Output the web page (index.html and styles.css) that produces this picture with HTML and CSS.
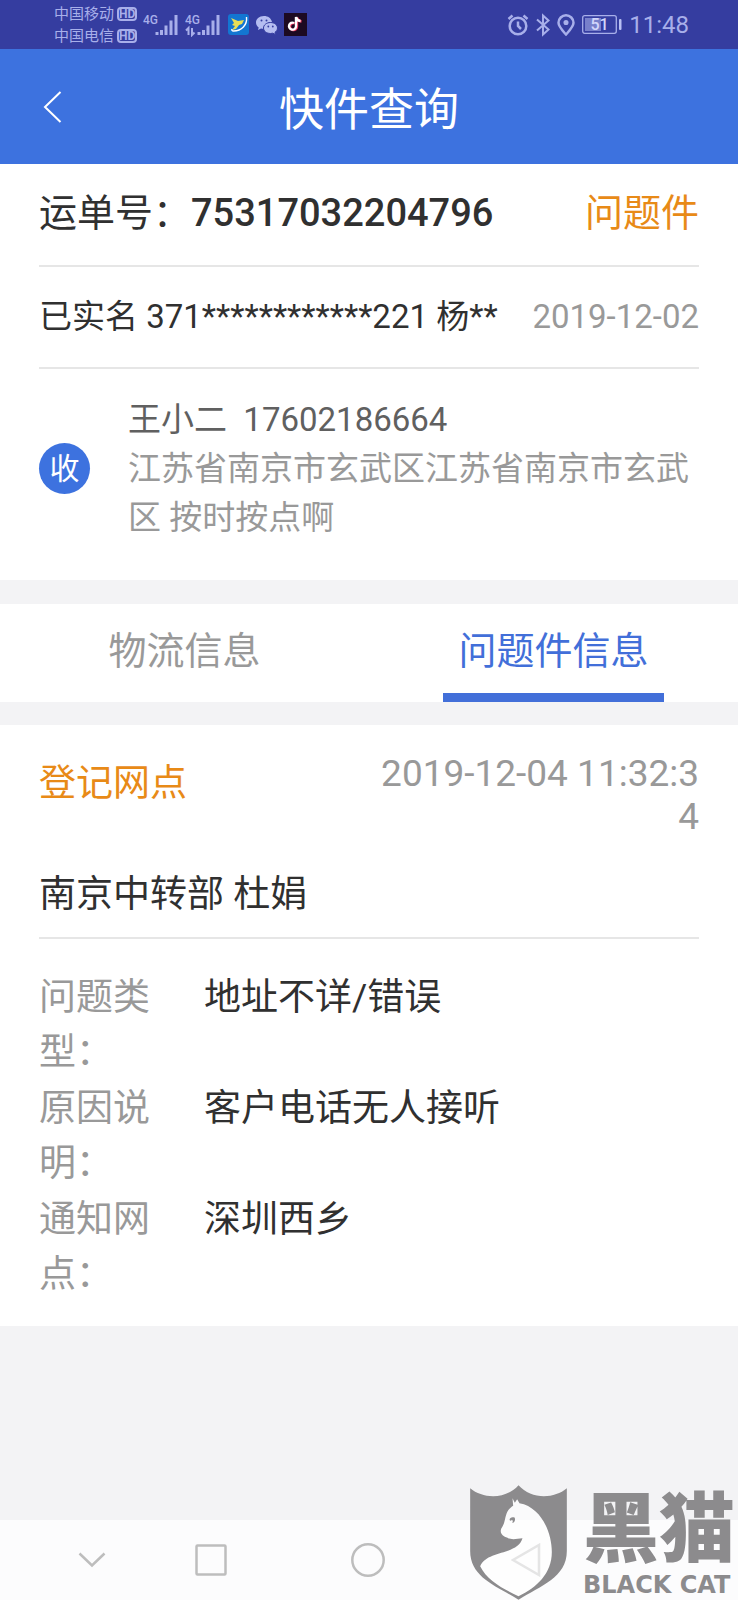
FILE: index.html
```html
<!DOCTYPE html>
<html lang="zh-CN">
<head>
<meta charset="utf-8">
<meta name="viewport" content="width=device-width, initial-scale=1">
<title>快件查询</title>
<link rel="stylesheet" href="styles.css">
</head>
<body>
<div class="page">
  <div class="status">
    <div class="status-left">
      <div class="carriers">
        <div class="carrier"><span>中国移动</span><span class="hd">HD</span></div>
        <div class="carrier"><span>中国电信</span><span class="hd">HD</span></div>
      </div>
      <svg class="signal" width="36" height="24" viewBox="0 0 36 24">
        <text x="0" y="11" class="net">4G</text>
        <g class="bars"><path d="M14 19v3M18.500 17v5M23 12.500v9.500M28 7.500v14.500M33 2v20"/></g>
      </svg>
      <svg class="signal" width="36" height="24" viewBox="0 0 36 24">
        <text x="0" y="11" class="net">4G</text>
        <g class="bars"><path d="M14 19v3M18.500 17v5M23 12.500v9.500M28 7.500v14.500M33 2v20"/></g>
        <path class="arrows" d="M3.500 22v-7l-2.500 2.500M7 15v7l2.500-2.500"/>
      </svg>
      <svg class="app-bird" width="21" height="21" viewBox="0 0 21 21">
        <rect width="21" height="21" rx="3" fill="#1376d2"/>
        <path d="M3 4l7 3 6-1-2 4-3 1-3 4-4 1 3-4-3-1 2-2z" fill="#e9df55"/>
        <path d="M18.500 3c1 8-5 14-13 14-1.500 0-2-1-1.500-2" fill="none" stroke="#fff" stroke-width="1.400"/>
      </svg>
      <svg class="app-chat" width="23" height="20" viewBox="0 0 23 20">
        <path d="M9 1C4 1 1 4 1 7.500c0 2 1 3.800 2.700 5L3 15l3-1.500 3 .5c0-4 3-7 8-7C16 3 13 1 9 1z" fill="#b5bdf1"/>
        <path d="M15.500 7.500c-4 0-7 2.500-7 5.500s3 5.500 7 5.500l2.300-.3L20.500 19.500l-.5-2.200c1.500-1 2.500-2.600 2.500-4.300 0-3-3-5.500-7-5.500z" fill="#b5bdf1" stroke="#353da0"/>
        <g fill="#353da0"><circle cx="6.500" cy="5.500" r="1"/><circle cx="11.500" cy="5.500" r="1"/><circle cx="13.300" cy="11.500" r=".9"/><circle cx="17.800" cy="11.500" r=".9"/></g>
      </svg>
      <svg class="app-note" width="23" height="23" viewBox="0 0 23 23">
        <rect width="23" height="23" fill="#1c0a22"/>
        <g fill="none" stroke-width="2.400"><path d="M11 10.500a3.500 3.500 0 1 0 2 3.300V4.500c.5 2.500 2 3.700 4.500 4" stroke="#ee3c63"/><path d="M10 10a3.500 3.500 0 1 0 2 3.300V4c.5 2.500 2 3.700 4.500 4" stroke="#fff"/></g>
      </svg>
    </div>
    <div class="status-right">
      <svg width="22" height="22" viewBox="0 0 22 22" class="line-icon"><circle cx="11" cy="12" r="8.300"/><path d="M11 7.500V12l3 3M1.500 5l4-3.500M20.500 5l-4-3.500"/></svg>
      <svg width="14" height="24" viewBox="0 0 14 24" class="line-icon thin"><path d="M1 6.500l11.500 10L7 21.500V2.500l5.500 5L1 17.500"/></svg>
      <svg width="18" height="22" viewBox="0 0 18 22" class="line-icon"><path d="M9 20.500C5 16 1.500 12.500 1.500 8.800a7.500 7.500 0 0 1 15 0C16.500 12.500 13 16 9 20.500z"/><circle cx="9" cy="8.500" r="1.300"/></svg>
      <svg width="40" height="19" viewBox="0 0 40 19" class="battery"><rect x=".7" y=".7" width="33.600" height="17.600" rx="2" fill="none" stroke="#a8afea" stroke-width="1.300"/><rect x="3" y="3" width="16" height="13" fill="#7880cb"/><rect x="37" y="4" width="2.500" height="11" rx="1" fill="#b9c0f4"/><text x="17.500" y="15" text-anchor="middle">51</text></svg>
      <span class="clock">11:48</span>
    </div>
  </div>

  <header class="header">
    <button class="back" type="button" aria-label="返回"><svg width="20" height="34" viewBox="0 0 20 34"><path d="M17.500 2L2 17l15.500 15"/></svg></button>
    <h1 class="title">快件查询</h1>
  </header>

  <main>
    <section class="card">
      <div class="row row-number">
        <span>运单号：<strong class="number">75317032204796</strong></span>
        <span class="warn">问题件</span>
      </div>
      <div class="row row-person">
        <span>已实名 371************221 杨**</span>
        <span class="muted">2019-12-02</span>
      </div>
      <div class="receiver">
        <span class="badge">收</span>
        <div class="address">
          <div class="contact">王小二&nbsp; 17602186664</div>
          <div class="muted">江苏省南京市玄武区江苏省南京市玄武区 按时按点啊</div>
        </div>
      </div>
    </section>

    <div class="tabs" role="tablist">
      <button class="tab" type="button" role="tab" aria-selected="false">物流信息</button>
      <button class="tab tab-active" type="button" role="tab" aria-selected="true">问题件信息</button>
    </div>

    <section class="card card-issue">
      <div class="issue-head">
        <span class="warn issue-title">登记网点</span>
        <span class="muted issue-time">2019-12-04 11:32:34</span>
      </div>
      <div class="issue-site">南京中转部 杜娟</div>
      <dl class="details">
        <dt>问题类型：</dt><dd>地址不详/错误</dd>
        <dt>原因说明：</dt><dd>客户电话无人接听</dd>
        <dt>通知网点：</dt><dd>深圳西乡</dd>
      </dl>
    </section>
  </main>

  <nav class="nav">
    <button type="button" aria-label="收起"><svg width="28" height="16" viewBox="0 0 28 16"><path d="M1.500 1.500L14 13.500l12.500-12"/></svg></button>
    <button type="button" aria-label="多任务"><svg width="32" height="32" viewBox="0 0 32 32"><rect x="1.500" y="1.500" width="29" height="29" rx="1"/></svg></button>
    <button type="button" aria-label="主页"><svg width="34" height="34" viewBox="0 0 34 34"><circle cx="17" cy="17" r="15.700"/></svg></button>
    <button type="button" aria-label="返回"><svg width="30" height="34" viewBox="0 0 30 34"><path d="M28 2v30L2 17z"/></svg></button>
  </nav>

  <div class="mark">
    <svg class="shield" width="97" height="115" viewBox="88 74 290 345">
      <path fill="#fff" fill-opacity=".6" d="M215 114l7 13 7-10 7 12C300 140 333 215 333 275c0 65-45 106-100 133-46-22-95-48-115-90 20-50 112-32 127-84-18 2-36 5-45-2-14-4-24-14-20-27 10-15 9-28 15-45 5-13 13-20 19-24z"/>
      <path fill="#8c8b8d" fill-rule="evenodd" d="M88 84c38 32 107 34 145-9 38 43 107 41 145 9v188c0 80-80 105-145 146C168 377 88 352 88 272zM215 114l2 22c-6 4-15 11-20 24-6 17-5 30-16 45-5 13 5 23 19 27 9 7 27 4 45 2-15 52-107 34-127 84 20 42 69 68 115 90 55-27 100-68 100-133 0-60-33-135-97-146l-7-12-7 10z"/>
      <path fill="#8c8b8d" d="M206 179c1-8 8-10 16-7 2 8-1 15-8 16 3-5 2-8-1-10-2 4-4 4-7 1z"/>
    </svg>
    <div class="mark-text">
      <span class="mark-name">黑猫</span>
      <span class="mark-sub">BLACK CAT</span>
    </div>
  </div>
</div>
</body>
</html>
```
FILE: styles.css
```css
* { box-sizing: border-box; }

body {
  margin: 0;
  background: #f3f3f5;
  color: #303030;
  font-family: Roboto, "Noto Sans CJK SC", sans-serif;
}

button {
  padding: 0;
  border: 0;
  background: none;
  color: inherit;
  font: inherit;
  cursor: pointer;
}

svg { display: block; flex: none; }

.page {
  position: relative;
  display: flex;
  flex-direction: column;
  min-height: 100vh;
}

/* Status bar */
.status {
  display: flex;
  justify-content: space-between;
  align-items: center;
  height: 49px;
  padding: 0 49px 0 54px;
  background: #353da0;
  color: #a8afea;
}

.status-left,
.status-right { display: flex; align-items: center; }

.status-right { gap: 7px; }

.carrier {
  display: flex;
  align-items: center;
  gap: 3px;
  font-size: 15px;
  line-height: 22px;
}

.hd {
  width: 20px;
  border: 2px solid #a8afea;
  border-radius: 4px;
  font-size: 12px;
  font-weight: 700;
  line-height: 10px;
  text-align: center;
}

.signal { margin-left: 6px; }
.net { fill: #a8afea; font-size: 12px; font-weight: 500; }
.bars { fill: none; stroke: #a8afea; stroke-width: 3; }
.arrows { fill: none; stroke: #a8afea; stroke-width: 2; }
.app-bird { margin-left: 7px; }
.app-chat { margin-left: 6px; }
.app-note { margin-left: 6px; }

.line-icon { fill: none; stroke: #a8afea; stroke-width: 2.5; }
.thin { stroke-width: 2; }
.battery text { fill: #d2d6fb; font-size: 16px; font-weight: 500; }
.clock { font-size: 24px; line-height: 28px; }

/* Title bar */
.header {
  display: grid;
  grid-template-columns: 1fr auto 1fr;
  align-items: center;
  height: 115px;
  padding: 0 43px;
  background: #3d72df;
  color: #fff;
}

.back { justify-self: start; }
.back path { fill: none; stroke: #fff; stroke-width: 2; }
.title { margin: 0; padding-top: 8px; font-size: 45px; font-weight: 400; line-height: 60px; }

/* Cards */
.card { padding: 0 39px; background: #fff; }
.warn { color: #e88a17; }
.muted { color: #999; }

.row {
  display: flex;
  justify-content: space-between;
  align-items: center;
  height: 102px;
  border-bottom: 2px solid #e6e6e6;
  white-space: nowrap;
}

.row-number { height: 103px; padding-bottom: 11px; font-size: 38px; }
.row-person { align-items: baseline; padding-top: 25px; font-size: 33px; line-height: 49px; }
.number { font-weight: 500; }

.receiver {
  display: flex;
  align-items: center;
  gap: 38px;
  padding: 26px 0 38px;
  font-size: 33px;
  line-height: 49px;
}

.badge {
  flex: none;
  width: 51px;
  height: 51px;
  border-radius: 50%;
  background: #3d72df;
  color: #fff;
  font-size: 30px;
  line-height: 51px;
  text-align: center;
}

.contact { color: #606060; }

/* Tabs */
.tabs {
  display: flex;
  height: 98px;
  margin: 24px 0 23px;
  background: #fff;
}

.tab {
  flex: 1;
  display: flex;
  flex-direction: column;
  align-items: center;
  justify-content: space-between;
  padding-top: 19px;
  color: #999;
  font-size: 38px;
  line-height: 56px;
}

.tab::after { content: ""; width: 60%; height: 9px; }
.tab-active { color: #426fd9; }
.tab-active::after { background: #426fd9; }

/* Issue record */
.card-issue { padding-top: 27px; padding-bottom: 24px; font-size: 37px; }

.issue-head { display: flex; justify-content: space-between; }
.issue-title { line-height: 64px; }
.issue-time { width: 50%; line-height: 43px; text-align: right; word-break: break-all; }

.issue-site {
  padding: 29px 0 15px;
  border-bottom: 2px solid #e6e6e6;
  line-height: 55px;
}

.details {
  display: grid;
  grid-template-columns: 1fr 3fr;
  row-gap: 1px;
  margin: 0;
  padding-top: 31px;
  line-height: 55px;
}

.details dt { padding-right: 40px; color: #999; }
.details dd { margin: 0; }

/* System navigation */
.nav {
  display: grid;
  grid-template-columns: 80fr 158fr 158fr 158fr;
  align-items: center;
  height: 80px;
  margin-top: auto;
  padding: 0 18% 0 7%;
  background: #fcfcfd;
}

.nav button { display: flex; justify-content: center; }
.nav svg { fill: none; stroke: #bdbdbd; stroke-width: 2.5; }

/* Watermark */
.mark {
  position: absolute;
  right: 3px;
  bottom: 0;
  display: flex;
  align-items: flex-end;
  gap: 16px;
  color: #8c8b8d;
  pointer-events: none;
}

.mark-text { display: flex; flex-direction: column; gap: 12px; padding-bottom: 4px; }
.mark-name { font-family: "Noto Sans CJK SC", sans-serif; font-size: 76px; font-weight: 900; line-height: 78px; }
.mark-sub { font-family: "DejaVu Sans", sans-serif; font-size: 24px; font-weight: 700; line-height: 22px; }
```
